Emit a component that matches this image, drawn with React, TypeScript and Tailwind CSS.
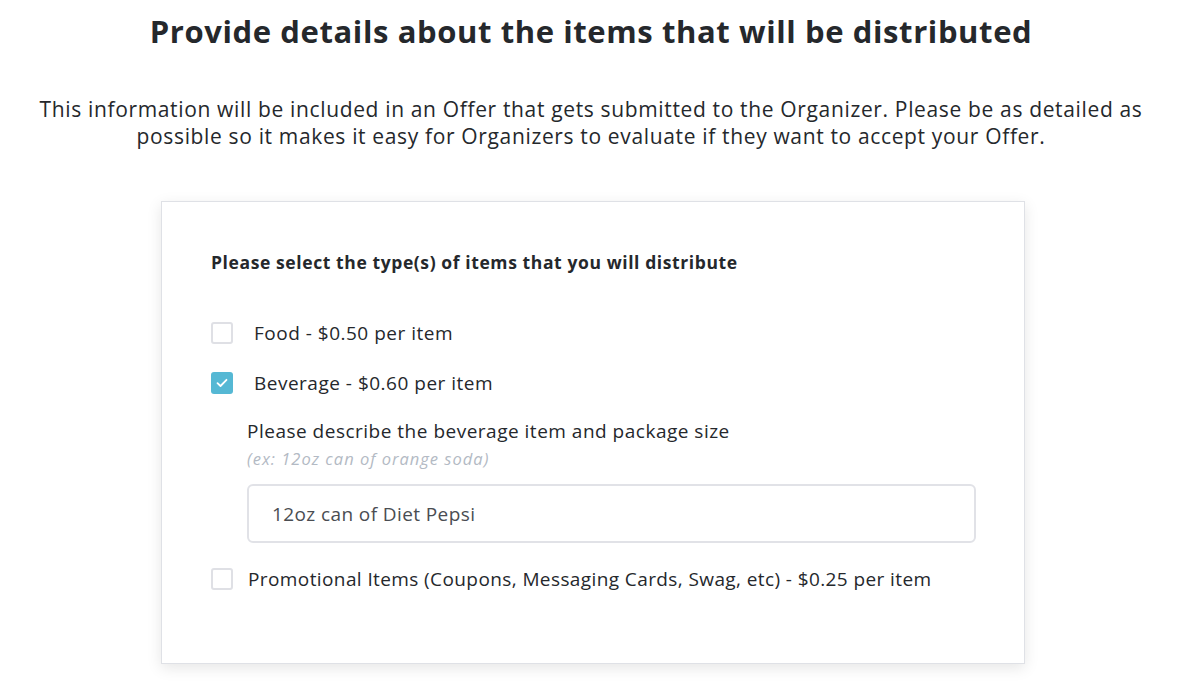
import React, { useState } from 'react';

const font = { fontFamily: '"Open Sans", Lato, sans-serif' };

function Checkbox({ checked, onChange }: { checked: boolean; onChange: () => void }) {
  return (
    <button
      type="button"
      onClick={onChange}
      className={
        checked
          ? 'w-[22px] h-[22px] shrink-0 rounded-[3px] bg-[#55b8d4] flex items-center justify-center'
          : 'w-[22px] h-[22px] shrink-0 rounded-[3px] border-2 border-[#dfe0e5] bg-white'
      }
    >
      {checked && (
        <svg width="12" height="10" viewBox="0 0 12 10" fill="none">
          <path d="M1.5 5.2 L4.5 8 L10.5 1.8" stroke="white" strokeWidth="1.8" strokeLinecap="round" strokeLinejoin="round" />
        </svg>
      )}
    </button>
  );
}

export default function App() {
  const [food, setFood] = useState(false);
  const [bev, setBev] = useState(true);
  const [promo, setPromo] = useState(false);
  const [desc, setDesc] = useState('12oz can of Diet Pepsi');

  return (
    <div className="min-h-screen bg-white text-[#25282c]" style={font}>
      <h1 className="pt-[12px] text-center text-[31px] leading-[38px] font-bold tracking-[0.6px]">
        Provide details about the items that will be distributed
      </h1>
      <p className="mt-[46px] mx-auto max-w-[1112px] text-center text-[21px] leading-[27px] tracking-[0.65px]">
        This information will be included in an Offer that gets submitted to the Organizer. Please be as detailed as possible so it makes it easy for Organizers to evaluate if they want to accept your Offer.
      </p>
      <div className="mt-[51px] ml-[161px] w-[864px] h-[463px] border border-[#dfe1e6] bg-white shadow-[0_4px_14px_rgba(0,0,0,0.10)] px-[49px] pt-[49px]">
        <h2 className="text-[17.5px] leading-[22px] font-bold tracking-[0.6px]">Please select the type(s) of items that you will distribute</h2>
        <div className="mt-[48px] flex items-center gap-[21px]">
          <Checkbox checked={food} onChange={() => setFood(!food)} />
          <span className="text-[19px] leading-[24px] tracking-[0.5px]">Food - $0.50 per item</span>
        </div>
        <div className="mt-[26px] flex items-center gap-[21px]">
          <Checkbox checked={bev} onChange={() => setBev(!bev)} />
          <span className="text-[19px] leading-[24px] tracking-[0.5px]">Beverage - $0.60 per item</span>
        </div>
        {bev && (
          <div className="ml-[36px] mt-[24px]">
            <div className="text-[19px] leading-[24px] tracking-[0.5px]">Please describe the beverage item and package size</div>
            <div className="mt-[6px] text-[16.5px] leading-[20px] italic tracking-[1px] text-[#b3bac4]">(ex: 12oz can of orange soda)</div>
            <input
              value={desc}
              onChange={(e) => setDesc(e.target.value)}
              className="mt-[15px] w-[729px] h-[59px] rounded-[6px] border-2 border-[#e1e2e7] px-[23px] text-[19px] tracking-[0.4px] text-[#4a4d52] outline-none"
              style={font}
            />
          </div>
        )}
        <div className="mt-[24px] flex items-center gap-[15px]">
          <Checkbox checked={promo} onChange={() => setPromo(!promo)} />
          <span className="text-[19px] leading-[24px] tracking-[0.4px]">Promotional Items (Coupons, Messaging Cards, Swag, etc) - $0.25 per item</span>
        </div>
      </div>
    </div>
  );
}
